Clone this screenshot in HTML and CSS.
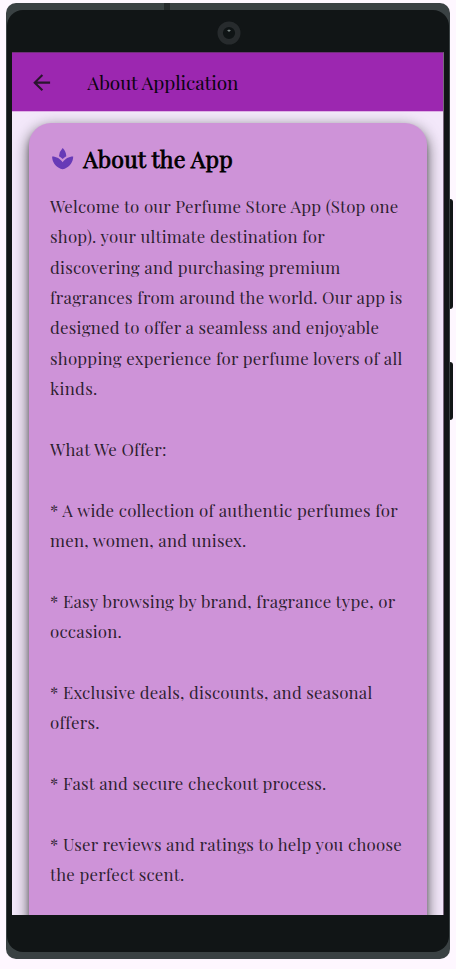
FILE: index.html
```html
<!DOCTYPE html>
<html lang="en">
<head>
<meta charset="utf-8">
<title>About Application</title>
<link rel="stylesheet" href="styles.css">
</head>
<body>
<div class="phone">
  <span class="antenna"></span>
  <span class="side-button volume"></span>
  <span class="side-button power"></span>
  <div class="bezel">
    <div class="camera-area">
      <svg class="camera" viewBox="0 0 24 24"><circle cx="12" cy="12" r="8.8" fill="#0f1415" stroke="#272b2d" stroke-width="5.4"/><path d="M10.5 9.5h3M12 8.5v2.5" stroke="#7d8786" stroke-width="1"/></svg>
    </div>
    <div class="screen">
      <header class="app-bar">
        <svg class="back" viewBox="0 0 24 24"><path fill="#29152d" d="M20 11H7.83l5.59-5.59L12 4l-8 8 8 8 1.41-1.41L7.83 13H20v-2z"/></svg>
        <h1 class="bar-title" data-width="151">About Application</h1>
      </header>
      <main class="content">
        <article class="card">
          <div class="card-head">
            <svg class="spa" viewBox="0 0 24 24"><path fill="#673ab7" d="M15.49 9.63c-.18-2.79-1.31-5.51-3.43-7.63a12.19 12.19 0 0 0-3.55 7.63c1.28.68 2.46 1.56 3.49 2.63 1.03-1.06 2.21-1.94 3.49-2.63zM12 15.45C9.85 12.17 6.18 10 2 10c0 5.32 3.36 9.82 8.03 11.49.63.23 1.29.4 1.97.51.68-.12 1.33-.29 1.97-.51C18.64 19.82 22 15.32 22 10c-4.18 0-7.85 2.17-10 5.45z"/></svg>
            <h2 class="card-title" data-width="149.5">About the App</h2>
          </div>
          <p class="copy"><span data-width="348.5">Welcome to our Perfume Store App (Stop one</span> <span data-width="275">shop). your ultimate destination for</span> <span data-width="290.5">discovering and purchasing premium</span> <span data-width="352.5">fragrances from around the world. Our app is</span> <span data-width="329">designed to offer a seamless and enjoyable</span> <span data-width="352.5">shopping experience for perfume lovers of all</span> <span data-width="47.5">kinds.</span></p>
          <p class="copy"><span data-width="116.5">What We Offer:</span></p>
          <p class="copy"><span data-width="348">* A wide collection of authentic perfumes for</span> <span data-width="196.5">men, women, and unisex.</span></p>
          <p class="copy"><span data-width="345.5">* Easy browsing by brand, fragrance type, or</span> <span data-width="72">occasion.</span></p>
          <p class="copy"><span data-width="322.5">* Exclusive deals, discounts, and seasonal</span> <span data-width="49.5">offers.</span></p>
          <p class="copy"><span data-width="276.5">* Fast and secure checkout process.</span></p>
          <p class="copy"><span data-width="352">* User reviews and ratings to help you choose</span> <span data-width="134.5">the perfect scent.</span></p>
        </article>
      </main>
    </div>
  </div>
</div>
<script src="script.js"></script>
</body>
</html>
```
FILE: styles.css
```css
* { box-sizing: border-box; }

body {
  margin: 0;
  height: 969px;
  padding: 3px 6px 10px;
  background: #fef7ff;
  overflow: hidden;
  font-family: "Playfair Display", "Liberation Serif", serif;
}

.phone {
  position: relative;
  width: 444px;
  height: 956px;
  padding: 7px 1px;
  background: #3a4143;
  border-radius: 10px;
}

.antenna {
  position: absolute;
  left: 158px;
  top: 0;
  width: 6px;
  height: 7px;
  background: #25292b;
}

.side-button {
  position: absolute;
  left: 443px;
  width: 4px;
  background: #111516;
  border-left: 1px solid #3a4143;
  border-radius: 0 3px 3px 0;
}

.volume { top: 196px; height: 110px; }
.power { top: 359px; height: 58px; }

.bezel {
  height: 942px;
  padding: 0 5px;
  background: #111516;
  border-radius: 16px;
}

.camera-area {
  height: 42px;
  display: flex;
  justify-content: center;
  padding: 11px 0 0 1px;
}

.camera { width: 24px; height: 24px; }

.screen {
  height: 863px;
  background: #f3e5f5;
  border-top: 1px solid #703078;
  border-right: 1px solid #79687d;
  overflow: hidden;
}

.app-bar {
  height: 58px;
  display: flex;
  align-items: center;
  padding: 0 17px;
  background: #9c27b0;
}

.back { width: 25.3px; height: 25.3px; margin-top: 1px; flex: none; }

.bar-title {
  margin: 0 0 1px 33px;
  font-size: 19px;
  line-height: 28px;
  font-weight: 400;
  color: #0c0310;
  white-space: nowrap;
}

.content {
  height: 804px;
  padding: 11px 16px 0 17px;
  border-top: 1px solid #dfb0e6;
  background: #f3e8fa;
  overflow: hidden;
}

.card {
  height: 850px;
  padding: 20px 20px 0 21px;
  background: #ce93d8;
  border-radius: 22px;
  box-shadow: 0 5px 15px rgba(0, 0, 0, 0.65), 0 5px 5px rgba(0, 0, 0, 0.25);
}

.card-head {
  height: 32px;
  display: flex;
  align-items: center;
  margin-bottom: 16px;
}

.spa { width: 25.3px; height: 25.3px; margin: 0 8px 0 0; flex: none; }

.card-title {
  margin: 0;
  font-size: 23.2px;
  line-height: 32px;
  font-weight: 400;
  color: #000;
  -webkit-text-stroke: 0.8px #000;
  white-space: nowrap;
}

.copy {
  margin: 0 0 30.36px;
  font-size: 16.87px;
  line-height: 30.36px;
  color: rgba(0, 0, 0, 0.8);
  white-space: nowrap;
}

.copy span { display: table; }
```
FILE: script.js
```js
// Track each line of copy out to its typeset measure.
document.querySelectorAll("[data-width]").forEach(function (line) {
  var range = document.createRange();
  range.selectNodeContents(line);
  var natural = range.getBoundingClientRect().width;
  var spacing = (Number(line.dataset.width) - natural) / line.textContent.length;
  line.style.letterSpacing = spacing.toFixed(3) + "px";
});
```
